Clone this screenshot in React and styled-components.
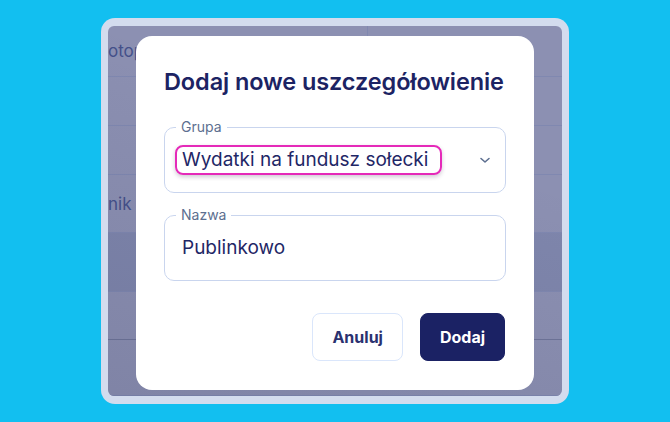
import React from 'react';
import styled, { createGlobalStyle } from 'styled-components';

const GlobalStyle = createGlobalStyle`
	html, body {
		margin: 0;
		padding: 0;
		background: #12bff0;
	}
	body {
		font-family: Inter, 'Noto Sans', 'Liberation Sans', sans-serif;
		-webkit-font-smoothing: antialiased;
	}
`;

const Page = styled.div`
	width: 670px;
	height: 422px;
	display: flex;
	justify-content: center;
	padding-top: 18px;
	box-sizing: border-box;
`;

const Frame = styled.div`
	width: 468px;
	height: 386px;
	box-sizing: border-box;
	padding: 8px 7px 8px 7px;
	background: #d3dcee;
	border-radius: 14px;
`;

const Screen = styled.div`
	position: relative;
	height: 100%;
	overflow: hidden;
	border-radius: 6px;
	background: #8c90b2;
`;

const Table = styled.div`
	display: flex;
	flex-direction: column;
`;

const Row = styled.div`
	display: flex;
	align-items: center;
	height: ${({ h }) => h}px;
	box-sizing: border-box;
	border-bottom: 1px solid ${({ strong }) => (strong ? '#6f7599' : '#8088b0')};
	background: ${({ active }) => (active ? '#7f86ac' : 'transparent')};
`;

const Cell = styled.div`
	height: 100%;
	display: flex;
	align-items: center;
	width: ${({ w }) => (w ? `${w}px` : 'auto')};
	flex: ${({ w }) => (w ? 'none' : '1')};
	border-right: ${({ divider }) => (divider ? '1px solid #8088b0' : 'none')};
	font-size: 17px;
	color: #44508a;
	white-space: nowrap;
	overflow: hidden;
`;

const Shade = styled.div`
	position: absolute;
	inset: 0;
	background: linear-gradient(
		200deg,
		rgba(20, 24, 60, 0) 30%,
		rgba(20, 24, 60, 0.1) 100%
	);
`;

const Overlay = styled.div`
	position: absolute;
	inset: 0;
	display: flex;
	justify-content: center;
	padding: 10px 28px 6px;
	box-sizing: border-box;
`;

const Modal = styled.div`
	flex: 1;
	background: #fff;
	border-radius: 16px;
	padding: 30px 28px 29px;
	display: flex;
	flex-direction: column;
	box-sizing: border-box;
`;

const Title = styled.h2`
	margin: 0 0 29px;
	font-size: 23.5px;
	line-height: 32px;
	font-weight: 600;
	color: #1c2363;
	letter-spacing: -0.1px;
`;

const Field = styled.div`
	position: relative;
	height: 66px;
	box-sizing: border-box;
	border: 1px solid #c9d5ee;
	border-radius: 10px;
	display: flex;
	align-items: center;
	padding: 0 10px;
	margin-bottom: ${({ gap }) => gap || 0}px;
`;

const Legend = styled.span`
	position: absolute;
	top: -10px;
	left: 11px;
	padding: 0 5px;
	background: #fff;
	font-size: 14px;
	line-height: 18px;
	color: #5d6f90;
`;

const Value = styled.span`
	font-size: 19px;
	color: #1f2766;
	padding: 0 7px;
	line-height: 24px;
`;

const Highlight = styled(Value)`
	padding: 1px 12px 1px 5px;
	border: 2px solid #e52ab9;
	border-radius: 8px;
	box-shadow: 0 2px 4px rgba(40, 20, 60, 0.22);
`;

const Chevron = styled.svg`
	margin-left: auto;
	margin-right: 3px;
	width: 14px;
	height: 14px;
`;

const Actions = styled.div`
	display: flex;
	justify-content: flex-end;
	gap: 17px;
	margin-top: auto;
	padding-right: 1px;
`;

const Button = styled.button`
	height: 48px;
	padding: 0 ${({ primary }) => (primary ? 19 : 19)}px;
	border-radius: 8px;
	font-family: inherit;
	font-size: 16px;
	font-weight: 700;
	cursor: pointer;
	border: 1.5px solid ${({ primary }) => (primary ? '#1b2264' : '#dae6fb')};
	background: ${({ primary }) => (primary ? '#1b2264' : '#fff')};
	color: ${({ primary }) => (primary ? '#fff' : '#2a3170')};
`;

const rows = [
	{ h: 51, text: 'otop', divider: true },
	{ h: 49 },
	{ h: 49 },
	{ h: 58, text: 'nik' },
	{ h: 59, active: true },
	{ h: 48, strong: true },
	{ h: 56 },
];

const App = () => {
	return (
		<>
			<GlobalStyle />
			<Page>
				<Frame>
					<Screen>
						<Table>
							{rows.map((r, i) => (
								<Row key={i} h={r.h} active={r.active} strong={r.strong}>
									<Cell w={259} divider={r.divider}>
										{r.text}
									</Cell>
									<Cell />
								</Row>
							))}
						</Table>
						<Shade />
						<Overlay>
							<Modal>
								<Title>Dodaj nowe uszczegółowienie</Title>
								<Field gap={22}>
									<Legend>Grupa</Legend>
									<Highlight>Wydatki na fundusz sołecki</Highlight>
									<Chevron viewBox="0 0 14 14" fill="none">
										<path
											d="M3 5.5l4 3.5 4-3.5"
											stroke="#5d6f90"
											strokeWidth="1.6"
											strokeLinecap="round"
											strokeLinejoin="round"
										/>
									</Chevron>
								</Field>
								<Field>
									<Legend>Nazwa</Legend>
									<Value>Publinkowo</Value>
								</Field>
								<Actions>
									<Button>Anuluj</Button>
									<Button primary>Dodaj</Button>
								</Actions>
							</Modal>
						</Overlay>
					</Screen>
				</Frame>
			</Page>
		</>
	);
};

export default App;
